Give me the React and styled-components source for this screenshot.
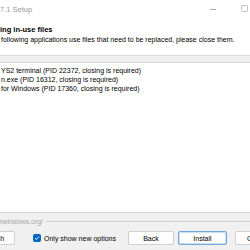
import React from 'react';
import styled, { createGlobalStyle } from 'styled-components';

const GlobalStyle = createGlobalStyle`
  html, body {
    margin: 0;
    padding: 0;
    width: 250px;
    height: 250px;
    overflow: hidden;
    background: #f0f0f0;
  }
  * {
    box-sizing: border-box;
  }
`;

const Window = styled.div`
  width: 250px;
  height: 250px;
  display: flex;
  flex-direction: column;
  overflow: hidden;
  background: #f0f0f0;
  font-family: 'Liberation Sans', Arial, sans-serif;
  font-size: 7px;
  color: #000;
`;

const TitleBar = styled.div`
  height: 18px;
  flex-shrink: 0;
  display: flex;
  align-items: center;
  background: #fff;
`;

const TitleText = styled.span`
  font-size: 7.5px;
  color: #9a9a9a;
  white-space: nowrap;
`;

const Controls = styled.div`
  margin-left: auto;
  display: flex;
  align-items: center;
  gap: 25px;
  padding-right: 2px;
`;

const MinIcon = styled.div`
  width: 6px;
  height: 1px;
  background: #a8a8a8;
`;

const MaxIcon = styled.div`
  width: 7px;
  height: 7px;
  border: 1px solid #c4c4c4;
  border-radius: 1px;
  margin-top: -1px;
`;

const Header = styled.div`
  height: 38px;
  flex-shrink: 0;
  padding-top: 7px;
  background: #fff;
  border-bottom: 1px solid #d9d9d9;
  white-space: nowrap;
`;

const HeaderTitle = styled.div`
  font-size: 7.5px;
  font-weight: 700;
  line-height: 10px;
`;

const HeaderText = styled.div`
  line-height: 10px;
  padding-left: 1px;
`;

const Body = styled.div`
  flex: 1;
  display: flex;
  flex-direction: column;
  padding-top: 6px;
`;

const ProcessList = styled.div`
  height: 151px;
  width: 280px;
  margin-left: -10px;
  padding: 3px 0 0 10px;
  background: #fff;
  border: 1px solid #d4d4d4;
  white-space: nowrap;
`;

const ProcessRow = styled.div`
  line-height: 9px;
`;

const LinkRow = styled.div`
  display: flex;
  align-items: center;
  margin-top: 4px;
  height: 9px;
`;

const LinkText = styled.span`
  color: #a6a6a6;
  white-space: nowrap;
`;

const LinkLine = styled.div`
  flex: 1;
  margin-left: 3px;
  border-top: 1px solid #cfcfcf;
`;

const ButtonRow = styled.div`
  display: flex;
  align-items: center;
  margin-top: 5px;
  height: 14px;
`;

const Button = styled.div`
  flex-shrink: 0;
  width: ${(p) => p.$width || 46}px;
  height: 14px;
  margin-left: ${(p) => p.$offset || 0}px;
  display: flex;
  align-items: center;
  justify-content: center;
  background: #fdfdfd;
  border: 1px solid ${(p) => (p.$focused ? '#6fa6dc' : '#d0d0d0')};
  box-shadow: ${(p) => (p.$focused ? 'inset 0 0 0 0.5px #9cc3ea' : 'none')};
  border-radius: 2px;
  white-space: nowrap;
`;

const CheckLabel = styled.label`
  display: flex;
  align-items: center;
  margin-left: 18px;
  white-space: nowrap;
`;

const CheckBox = styled.span`
  width: 8px;
  height: 8px;
  margin-right: 3px;
  border-radius: 2px;
  background: #0067c0;
  display: flex;
  align-items: center;
  justify-content: center;
`;

const processes = [
  'YS2 terminal (PID 22372, closing is required)',
  'n.exe (PID 16312, closing is required)',
  'for Windows (PID 17360, closing is required)',
];

const App = () => {
  return (
    <>
      <GlobalStyle />
      <Window>
        <TitleBar>
          <TitleText>7.1 Setup</TitleText>
          <Controls>
            <MinIcon />
            <MaxIcon />
          </Controls>
        </TitleBar>
        <Header>
          <HeaderTitle>ing in-use files</HeaderTitle>
          <HeaderText>
            following applications use files that need to be replaced, please
            close them.
          </HeaderText>
        </Header>
        <Body>
          <ProcessList>
            {processes.map((item) => (
              <ProcessRow key={item}>{item}</ProcessRow>
            ))}
          </ProcessList>
          <LinkRow>
            <LinkText>rwindows.org/</LinkText>
            <LinkLine />
          </LinkRow>
          <ButtonRow>
            <Button $offset={-31}>Refresh</Button>
            <CheckLabel>
              <CheckBox>
                <svg width="6" height="6" viewBox="0 0 6 6">
                  <path
                    d="M1 3.2 L2.4 4.5 L5 1.5"
                    fill="none"
                    stroke="#fff"
                    strokeWidth="0.9"
                  />
                </svg>
              </CheckBox>
              Only show new options
            </CheckLabel>
            <Button $offset={12}>Back</Button>
            <Button $offset={4} $width={49} $focused>
              Install
            </Button>
            <Button $offset={8}>Cancel</Button>
          </ButtonRow>
        </Body>
      </Window>
    </>
  );
};

export default App;
